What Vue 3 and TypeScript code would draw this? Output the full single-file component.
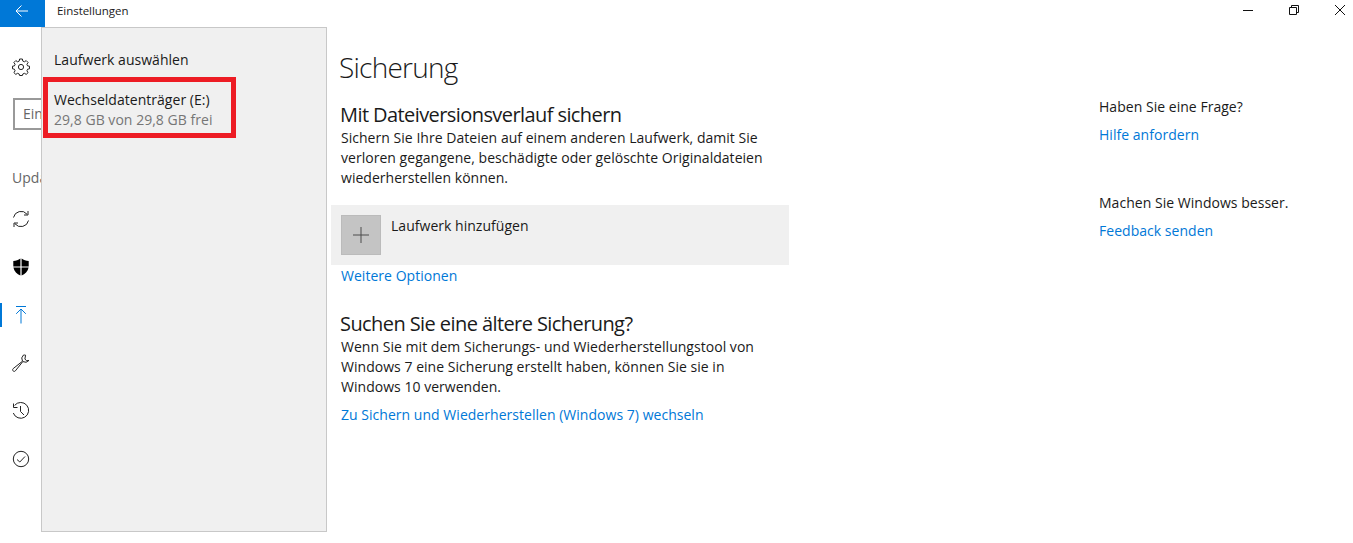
<template>
    <div class="window">
        <header class="titlebar">
            <button class="back">
                <svg width="13" height="12" viewBox="0 0 13 12" fill="none" stroke="#fff" stroke-width="1">
                    <path d="M1 6H13M6.5 0.5L1 6L6.5 11.5" />
                </svg>
            </button>
            <span class="app-title">Einstellungen</span>
            <div class="controls">
                <svg width="12" height="12" viewBox="0 0 12 12" fill="none" stroke="#111" stroke-width="1">
                    <path d="M1 6.5H11" />
                </svg>
                <svg width="12" height="12" viewBox="0 0 12 12" fill="none" stroke="#111" stroke-width="1">
                    <path d="M1.5 3.5H8.5V10.5H1.5ZM3.5 3.5V1.5H10.5V8.5H8.5" />
                </svg>
                <svg width="12" height="12" viewBox="0 0 12 12" fill="none" stroke="#111" stroke-width="1">
                    <path d="M1 1L11 11M11 1L1 11" />
                </svg>
            </div>
        </header>

        <div class="body">
            <nav class="nav">
                <div class="home">
                    <svg width="18" height="18" viewBox="0 0 18 18" fill="none" stroke="#222" stroke-width="1">
                        <circle cx="9" cy="9" r="2.6" />
                        <path
                            d="M7.6 1H10.4L10.8 3.1L12.4 3.8L14.2 2.6L16.1 4.5L14.9 6.3L15.6 7.9L17.5 8.2V10.8L15.6 11.2L14.9 12.8L16.1 14.6L14.2 16.4L12.4 15.3L10.8 16L10.4 17.5H7.6L7.2 16L5.6 15.3L3.8 16.4L1.9 14.6L3.1 12.8L2.4 11.2L0.5 10.8V8.2L2.4 7.9L3.1 6.3L1.9 4.5L3.8 2.6L5.6 3.8L7.2 3.1Z"
                            stroke-linejoin="round" />
                    </svg>
                </div>
                <div class="search">Einstellung suchen</div>
                <div class="nav-group">Update und Sicherheit</div>
                <ul class="nav-list">
                    <li class="nav-item">
                        <svg width="18" height="18" viewBox="0 0 18 18" fill="none" stroke="#222" stroke-width="1">
                            <path d="M1.5 7.5A7.7 7.7 0 0 1 15 4.2M16.5 10.5A7.7 7.7 0 0 1 3 13.8" />
                            <path d="M16 1V5H12M2 17V13H6" />
                        </svg>
                    </li>
                    <li class="nav-item">
                        <svg width="16" height="18" viewBox="0 0 16 18" fill="#000">
                            <path d="M7.4 0.5V8.4H0.3V3C3 3 5.4 2 7.4 0.5ZM8.6 0.5C10.6 2 13 3 15.7 3V8.4H8.6ZM0.4 9.6H7.4V17.5C4 16.4 1.2 13.6 0.4 9.6ZM8.6 9.6H15.6C14.8 13.6 12 16.4 8.6 17.5Z" />
                        </svg>
                    </li>
                    <li class="nav-item active">
                        <svg width="12" height="18" viewBox="0 0 12 18" fill="none" stroke="#0078d7" stroke-width="1">
                            <path d="M1 0.5H11M6 3V17.5M1.2 7.8L6 3L10.8 7.8" />
                        </svg>
                    </li>
                    <li class="nav-item">
                        <svg width="18" height="18" viewBox="0 0 18 18" fill="none" stroke="#222" stroke-width="1">
                            <path
                                d="M11.5 1A5 5 0 0 0 10.5 7.2L1.2 14.6C0.3 15.5 0.6 16.4 1.1 16.9C1.7 17.5 2.6 17.7 3.4 16.8L10.8 7.6A5 5 0 0 0 17 6.4L14.6 6.8L12.9 5L13.6 1.2C13 1 12.2 0.9 11.5 1Z"
                                stroke-linejoin="round" />
                        </svg>
                    </li>
                    <li class="nav-item">
                        <svg width="18" height="18" viewBox="0 0 18 18" fill="none" stroke="#222" stroke-width="1">
                            <path d="M2.6 3.4A7.9 7.9 0 1 1 1.3 11" />
                            <path d="M1.5 1.5V5.5H5.5" />
                            <path d="M8.5 4V9.5L12 13" />
                        </svg>
                    </li>
                    <li class="nav-item">
                        <svg width="18" height="18" viewBox="0 0 18 18" fill="none" stroke="#222" stroke-width="1">
                            <circle cx="9" cy="9" r="7.7" />
                            <path d="M5 9.5L7.8 12L13 6.5" />
                        </svg>
                    </li>
                </ul>
            </nav>

            <main class="content">
                <h1>Sicherung</h1>

                <h2 class="first">Mit Dateiversionsverlauf sichern</h2>
                <p>
                    Sichern Sie Ihre Dateien auf einem anderen Laufwerk, damit Sie<br />
                    verloren gegangene, beschädigte oder gelöschte Originaldateien<br />
                    wiederherstellen können.
                </p>

                <div class="add-drive">
                    <span class="add-icon">
                        <svg width="16" height="16" viewBox="0 0 16 16" fill="none" stroke="#4c4c4c" stroke-width="1">
                            <path d="M8 0V16M0 8H16" />
                        </svg>
                    </span>
                    <span>Laufwerk hinzufügen</span>
                </div>
                <a class="link more">Weitere Optionen</a>

                <h2 class="second">Suchen Sie eine ältere Sicherung?</h2>
                <p>
                    Wenn Sie mit dem Sicherungs- und Wiederherstellungstool von<br />
                    Windows 7 eine Sicherung erstellt haben, können Sie sie in<br />
                    Windows 10 verwenden.
                </p>
                <a class="link switch">Zu Sichern und Wiederherstellen (Windows 7) wechseln</a>
            </main>

            <aside class="side">
                <div class="side-label">Haben Sie eine Frage?</div>
                <a class="link">Hilfe anfordern</a>
                <div class="side-label better">Machen Sie Windows besser.</div>
                <a class="link">Feedback senden</a>
            </aside>
        </div>

        <div class="flyout">
            <div class="flyout-title">Laufwerk auswählen</div>
            <div class="drive">
                <div class="drive-name">{{ drive.name }}</div>
                <div class="drive-free">{{ drive.free }}</div>
            </div>
        </div>
    </div>
</template>

<script setup lang="ts">
interface Drive {
    name: string;
    free: string;
}

const drive: Drive = {
    name: 'Wechseldatenträger (E:)',
    free: '29,8 GB von 29,8 GB frei'
};
</script>

<style>
html,
body {
    margin: 0;
    background: #fff;
    overflow: hidden;
}
</style>

<style scoped>
.window {
    position: relative;
    width: 1353px;
    height: 543px;
    overflow: hidden;
    font-family: 'Open Sans', 'Noto Sans', 'Liberation Sans', sans-serif;
    font-size: 14px;
    letter-spacing: 0.03px;
    color: #1a1a1a;
    background: #fff;
}

.titlebar {
    display: flex;
    align-items: flex-start;
    height: 27px;
}

.back {
    display: flex;
    justify-content: center;
    align-items: flex-start;
    width: 45px;
    height: 27px;
    padding: 5px 3px 0 0;
    border: none;
    background: #0078d7;
}

.app-title {
    margin: 2px 0 0 12px;
    font-size: 11.5px;
    line-height: 17px;
    letter-spacing: -0.05px;
}

.controls {
    display: flex;
    gap: 34px;
    margin: 4px 7px 0 auto;
}

.body {
    display: flex;
}

.nav {
    width: 331px;
    flex-shrink: 0;
    padding-left: 13px;
    box-sizing: border-box;
}

.home {
    margin: 31px 0 0 -1px;
    height: 18px;
}

.search {
    box-sizing: border-box;
    width: 290px;
    height: 32px;
    margin-top: 22px;
    padding: 5px 8px;
    border: 2px solid #999;
    color: #666;
    line-height: 18px;
}

.nav-group {
    margin: 38px 0 0 -1px;
    line-height: 20px;
    color: #666;
}

.nav-list {
    list-style: none;
    margin: 7px 0 0 -13px;
    padding: 0;
}

.nav-item {
    display: flex;
    align-items: center;
    justify-content: center;
    width: 42px;
    height: 48px;
    box-sizing: border-box;
}

.nav-item.active {
    border-left: 2px solid #0078d7;
    padding-right: 2px;
    height: 24px;
    margin: 12px 0;
}

.content {
    width: 500px;
    flex-shrink: 0;
}

.content h1 {
    margin: 20px 0 0 8px;
    font-size: 28px;
    font-weight: 300;
    line-height: 40px;
    letter-spacing: -0.75px;
}

.content h2 {
    margin: 0 0 0 9px;
    font-size: 20px;
    font-weight: 400;
    line-height: 27px;
    letter-spacing: -0.58px;
}

.content h2.first {
    margin-top: 14px;
}

.content h2.second {
    margin-top: 24px;
}

.content p {
    margin: 0 0 0 10px;
    line-height: 20px;
}

.add-drive {
    display: flex;
    gap: 10px;
    width: 458px;
    height: 60px;
    margin-top: 17px;
    padding: 10px;
    box-sizing: border-box;
    background: #f0f0f0;
}

.add-drive > span:last-child {
    line-height: 22px;
}

.add-icon {
    display: flex;
    align-items: center;
    justify-content: center;
    width: 40px;
    height: 40px;
    box-sizing: border-box;
    background: #c4c4c4;
    border: 1px solid #bbb;
}

.link {
    display: block;
    color: #0078d7;
    line-height: 20px;
}

.more {
    margin: 1px 0 0 10px;
}

.switch {
    margin: 8px 0 0 10px;
}

.side {
    margin: 70px 0 0 268px;
    white-space: nowrap;
}

.side-label {
    line-height: 20px;
    margin-bottom: 8px;
}

.side-label.better {
    margin-top: 48px;
}

.flyout {
    position: absolute;
    left: 41px;
    top: 27px;
    width: 286px;
    height: 505px;
    box-sizing: border-box;
    background: #f0f0f0;
    border: 1px solid #c8c8c8;
}

.flyout-title {
    margin: 22px 0 0 12px;
    line-height: 20px;
}

.drive {
    position: absolute;
    left: 1px;
    top: 49px;
    width: 193px;
    height: 61px;
    box-sizing: border-box;
    padding: 8px 0 0 6px;
    border: 5px solid #ed1c24;
    white-space: nowrap;
}

.drive-name,
.drive-free {
    line-height: 20px;
}

.drive-free {
    color: #767676;
}
</style>
